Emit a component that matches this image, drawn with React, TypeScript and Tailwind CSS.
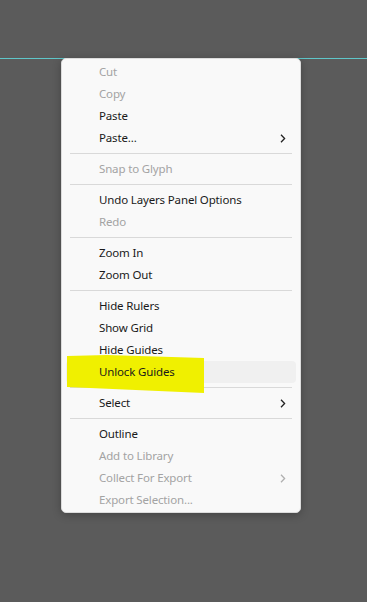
type Item = { label: string; disabled?: boolean; sub?: boolean; hover?: boolean } | "sep";

const items: Item[] = [
  { label: "Cut", disabled: true },
  { label: "Copy", disabled: true },
  { label: "Paste" },
  { label: "Paste...", sub: true },
  "sep",
  { label: "Snap to Glyph", disabled: true },
  "sep",
  { label: "Undo Layers Panel Options" },
  { label: "Redo", disabled: true },
  "sep",
  { label: "Zoom In" },
  { label: "Zoom Out" },
  "sep",
  { label: "Hide Rulers" },
  { label: "Show Grid" },
  { label: "Hide Guides" },
  { label: "Unlock Guides", hover: true },
  "sep",
  { label: "Select", sub: true },
  "sep",
  { label: "Outline" },
  { label: "Add to Library", disabled: true },
  { label: "Collect For Export", disabled: true, sub: true },
  { label: "Export Selection...", disabled: true },
];

function Chevron({ disabled }: { disabled?: boolean }) {
  return (
    <svg width="6" height="9" viewBox="0 0 6 9" className={disabled ? "text-[#b0b0b0]" : "text-[#222]"}>
      <path d="M1 0.8 L4.6 4.5 L1 8.2" fill="none" stroke="currentColor" strokeWidth="1.3" />
    </svg>
  );
}

export default function App() {
  return (
    <div className="relative w-[367px] h-[602px] bg-[#5b5b5b] overflow-hidden" style={{ fontFamily: '"Noto Sans", "Open Sans", sans-serif' }}>
      <div className="absolute left-0 right-0 top-[58px] h-px bg-[#5fc6c9]" />
      <div className="relative ml-[61px] mt-[58px] w-[240px] rounded-[5px] bg-[#f9f9f9] border border-[#dcdcdc] shadow-[0_2px_8px_rgba(0,0,0,0.25)] pt-[2px] pb-[1px] px-[4px]">
        {items.map((it, i) =>
          it === "sep" ? (
            <div key={i} className="py-[4px] px-[4px]">
              <div className="h-px bg-[#d9d9d9]" />
            </div>
          ) : (
            <div
              key={i}
              className={`relative flex items-center h-[22px] pl-[33px] pr-[10px] rounded-[4px] text-[11.5px] tracking-[-0.15px] ${
                it.hover ? "bg-[#f0f0f0]" : ""
              } ${it.disabled ? "text-[#a3a3a3]" : "text-[#1a1a1a]"}`}
            >
              {it.hover && (
                <svg className="absolute left-[1px] top-[-6px]" width="140" height="38" viewBox="0 0 140 38">
                  <path d="M0 1 L40 0 L137 3 L137 38 L0 32 Z" fill="#f0f000" />
                </svg>
              )}
              <span className="relative flex-1">{it.label}</span>
              {it.sub && <Chevron disabled={it.disabled} />}
            </div>
          )
        )}
      </div>
    </div>
  );
}
